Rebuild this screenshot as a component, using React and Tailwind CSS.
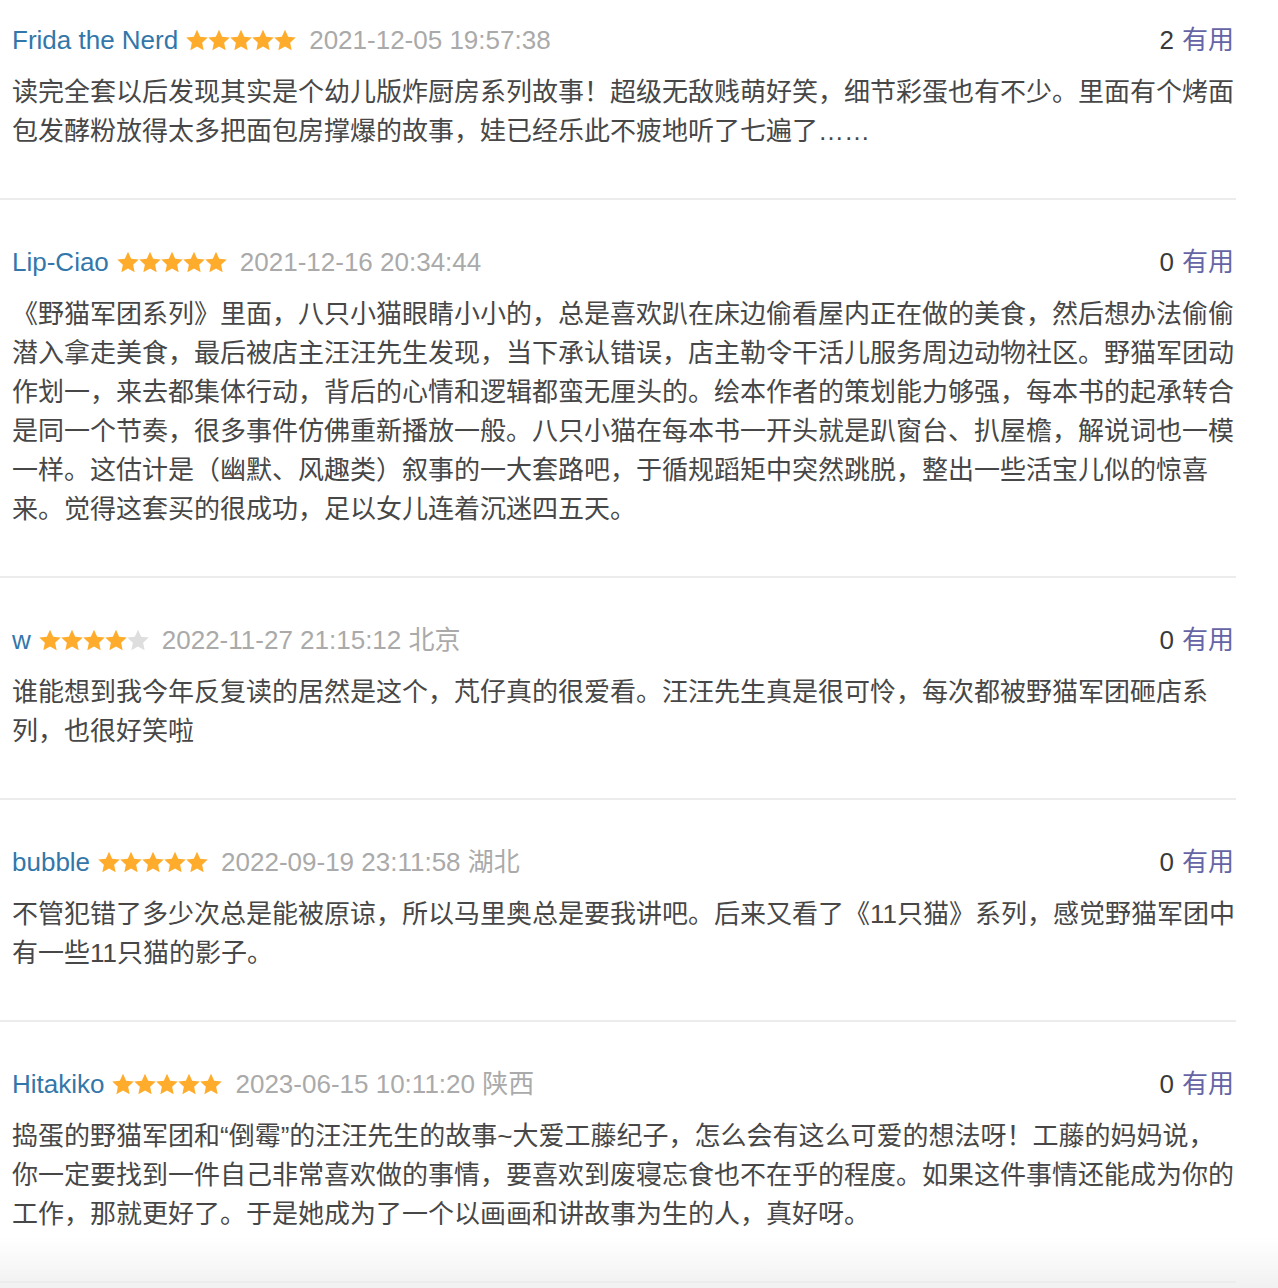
import React from "react";

const comments = [
  {
    name: "Frida the Nerd",
    stars: 5,
    date: "2021-12-05 19:57:38",
    votes: 2,
    text: "读完全套以后发现其实是个幼儿版炸厨房系列故事！超级无敌贱萌好笑，细节彩蛋也有不少。里面有个烤面包发酵粉放得太多把面包房撑爆的故事，娃已经乐此不疲地听了七遍了……",
  },
  {
    name: "Lip-Ciao",
    stars: 5,
    date: "2021-12-16 20:34:44",
    votes: 0,
    text: "《野猫军团系列》里面，八只小猫眼睛小小的，总是喜欢趴在床边偷看屋内正在做的美食，然后想办法偷偷潜入拿走美食，最后被店主汪汪先生发现，当下承认错误，店主勒令干活儿服务周边动物社区。野猫军团动作划一，来去都集体行动，背后的心情和逻辑都蛮无厘头的。绘本作者的策划能力够强，每本书的起承转合是同一个节奏，很多事件仿佛重新播放一般。八只小猫在每本书一开头就是趴窗台、扒屋檐，解说词也一模一样。这估计是（幽默、风趣类）叙事的一大套路吧，于循规蹈矩中突然跳脱，整出一些活宝儿似的惊喜来。觉得这套买的很成功，足以女儿连着沉迷四五天。",
  },
  {
    name: "w",
    stars: 4,
    date: "2022-11-27 21:15:12 北京",
    votes: 0,
    text: "谁能想到我今年反复读的居然是这个，芃仔真的很爱看。汪汪先生真是很可怜，每次都被野猫军团砸店系列，也很好笑啦",
  },
  {
    name: "bubble",
    stars: 5,
    date: "2022-09-19 23:11:58 湖北",
    votes: 0,
    text: "不管犯错了多少次总是能被原谅，所以马里奥总是要我讲吧。后来又看了《11只猫》系列，感觉野猫军团中有一些11只猫的影子。",
  },
  {
    name: "Hitakiko",
    stars: 5,
    date: "2023-06-15 10:11:20 陕西",
    votes: 0,
    text: "捣蛋的野猫军团和“倒霉”的汪汪先生的故事~大爱工藤纪子，怎么会有这么可爱的想法呀！工藤的妈妈说，你一定要找到一件自己非常喜欢做的事情，要喜欢到废寝忘食也不在乎的程度。如果这件事情还能成为你的工作，那就更好了。于是她成为了一个以画画和讲故事为生的人，真好呀。",
  },
];

function Star({ filled }) {
  return (
    <svg width="22" height="22" viewBox="0 0 22 22" className="block">
      <polygon
        points="11,0.7 14.17,7.63 21.75,8.51 16.14,13.67 17.64,21.14 11,17.4 4.36,21.14 5.86,13.67 0.25,8.51 7.83,7.63"
        fill={filled ? "#ffac2d" : "#dedede"}
      />
    </svg>
  );
}

function Stars({ n }) {
  return (
    <span className="flex items-center ml-[8px] mt-[-2px]">
      {[0, 1, 2, 3, 4].map((i) => (
        <Star key={i} filled={i < n} />
      ))}
    </span>
  );
}

function Comment({ c, first }) {
  return (
    <div
      className={`w-[1236px] pl-[12px] border-b-2 border-[#ececec] pb-[47px] ${
        first ? "pt-[21px]" : "pt-[43px]"
      }`}
    >
      <div className="flex items-center justify-between h-[39px] w-[1222px] text-[26px] leading-[39px]">
        <div className="flex items-center">
          <span className="text-[#3377aa]">{c.name}</span>
          <Stars n={c.stars} />
          <span className="text-[#aaaaaa] ml-[13px]">{c.date}</span>
        </div>
        <div className="flex items-center">
          <span className="text-[#3a3a3a]">{c.votes}</span>
          <span className="text-[#6565a5] ml-[8px]">有用</span>
        </div>
      </div>
      <p className="mt-[13px] w-[1224px] text-[26px] leading-[39px] text-[#474747]">
        {c.text}
      </p>
    </div>
  );
}

export default function App() {
  return (
    <div
      className="relative w-[1278px] h-[1288px] overflow-hidden bg-white"
      style={{ fontFamily: '"Liberation Sans", "Noto Sans CJK SC", sans-serif' }}
    >
      {comments.map((c, i) => (
        <Comment key={i} c={c} first={i === 0} />
      ))}
      <div className="absolute left-0 right-0 bottom-0 h-[50px] bg-gradient-to-b from-[rgba(240,240,240,0)] to-[rgba(236,236,236,0.75)] pointer-events-none" />
    </div>
  );
}
